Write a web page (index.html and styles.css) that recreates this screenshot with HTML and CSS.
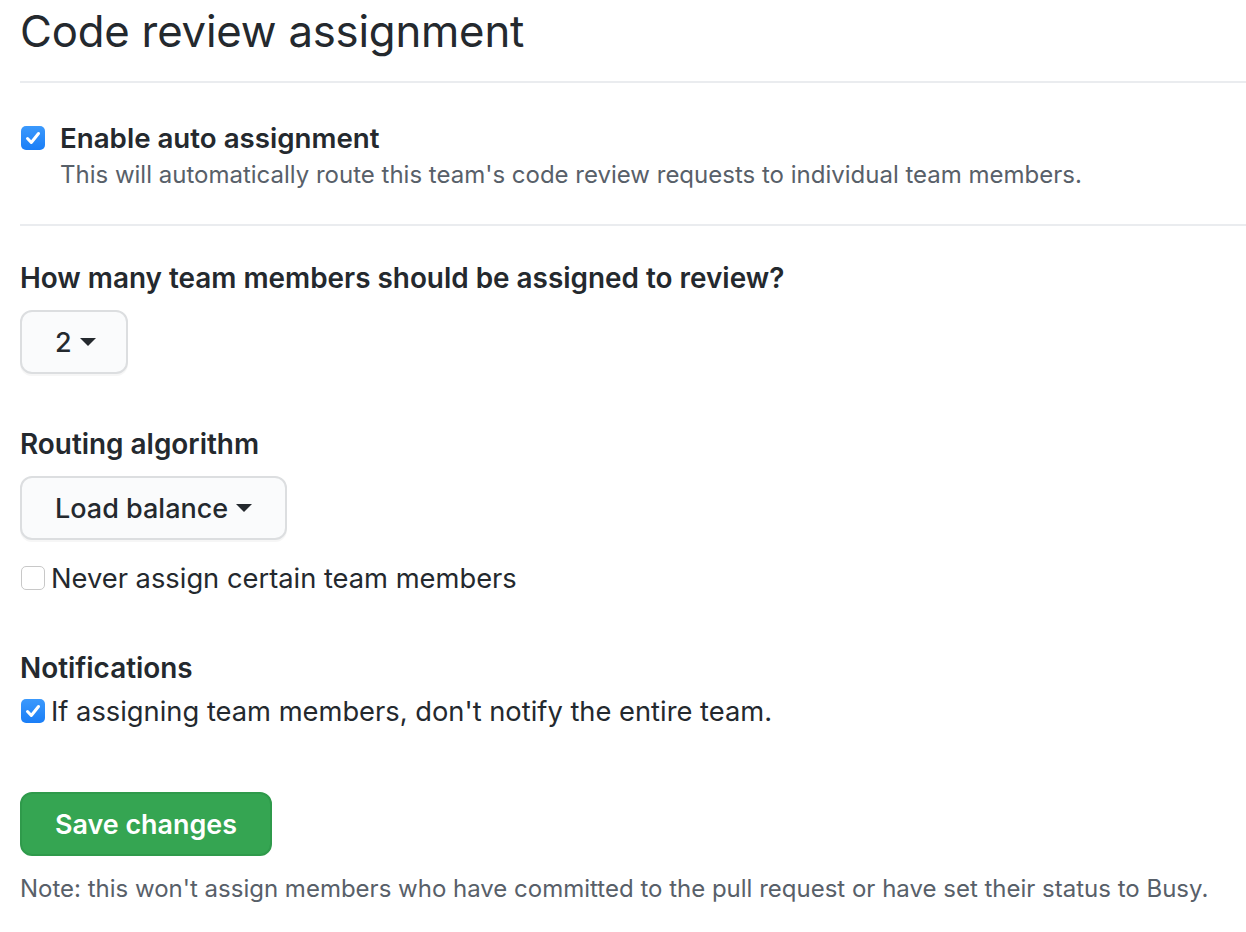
FILE: index.html
```html
<!DOCTYPE html>
<html lang="en">
<head>
<meta charset="utf-8">
<title>Code review assignment</title>
<link rel="stylesheet" href="styles.css">
</head>
<body>
<div class="page">
  <div class="subhead">
    <h2 class="subhead-heading">Code review assignment</h2>
  </div>

  <div class="section section-bordered">
    <label class="check-row check-row-main">
      <span class="cb cb-checked"><svg viewBox="0 0 24 24" width="24" height="24"><path d="M6.5 12.5l3.8 4 7.2-9" fill="none" stroke="#fff" stroke-width="3" stroke-linecap="round" stroke-linejoin="round"/></svg></span>
      <span class="check-label-strong">Enable auto assignment</span>
    </label>
    <p class="check-note">This will automatically route this team's code review requests to individual team members.</p>
  </div>

  <div class="section">
    <h3 class="field-label first">How many team members should be assigned to review?</h3>
    <button class="btn btn-select btn-small"><span>2</span><span class="caret"></span></button>

    <h3 class="field-label">Routing algorithm</h3>
    <button class="btn btn-select"><span>Load balance</span><span class="caret"></span></button>

    <label class="check-row check-row-plain gap-never">
      <span class="cb cb-empty"></span>
      <span class="check-label">Never assign certain team members</span>
    </label>

    <h3 class="field-label notif">Notifications</h3>
    <label class="check-row check-row-plain gap-notify">
      <span class="cb cb-checked"><svg viewBox="0 0 24 24" width="24" height="24"><path d="M6.5 12.5l3.8 4 7.2-9" fill="none" stroke="#fff" stroke-width="3" stroke-linecap="round" stroke-linejoin="round"/></svg></span>
      <span class="check-label">If assigning team members, don't notify the entire team.</span>
    </label>

    <button class="btn btn-primary">Save changes</button>
    <p class="note">Note: this won't assign members who have committed to the pull request or have set their status to Busy.</p>
  </div>
</div>
</body>
</html>
```

FILE: styles.css
```css
* { box-sizing: border-box; }

html, body {
  margin: 0;
  padding: 0;
  background: #ffffff;
}

body {
  font-family: Inter, "Noto Sans", "Liberation Sans", sans-serif;
  color: #24292e;
}

.page {
  padding-left: 20px;
}

.subhead {
  border-bottom: 2px solid #eaecef;
  padding-bottom: 17px;
}

.subhead-heading {
  margin: 0;
  font-size: 43.7px;
  font-weight: 400;
  line-height: 64px;
  letter-spacing: -0.2px;
}

.section-bordered {
  border-bottom: 2px solid #eaecef;
  padding-top: 37px;
  padding-bottom: 31px;
}

.check-row {
  display: flex;
  align-items: center;
  height: 36px;
  cursor: pointer;
}

.check-row-main .cb { margin-right: 15px; }
.check-row-plain .cb { margin-right: 6px; }

.cb {
  width: 24px;
  height: 24px;
  border-radius: 5px;
  flex: none;
  margin-left: 1px;
  display: flex;
}

.cb-checked {
  background: linear-gradient(#3b99fc, #1a7ef7);
}

.cb-empty {
  background: #fff;
  border: 1px solid #c8c8c8;
}

.check-label-strong {
  font-size: 27.7px;
  font-weight: 600;
}

.check-label {
  font-size: 27.3px;
  font-weight: 400;
}

.check-note {
  margin: 1px 0 0 40px;
  font-size: 24px;
  line-height: 36px;
  color: #586069;
}

.field-label {
  margin: 52px 0 14px;
  font-size: 27.9px;
  font-weight: 600;
  line-height: 36px;
}

.field-label.first { margin-top: 34px; }
.field-label.notif { margin-top: 54px; margin-bottom: 7px; }

.btn {
  display: flex;
  align-items: center;
  height: 64px;
  border-radius: 12px;
  font-family: inherit;
  font-size: 27px;
  font-weight: 500;
  cursor: pointer;
}

.btn-select {
  padding: 0 33px;
  background: #fafbfc;
  border: 2px solid #dcdee0;
  color: #24292e;
  box-shadow: 0 2px 0 rgba(27, 31, 35, 0.04);
}

.btn-small {
  width: 108px;
}

.caret {
  width: 0;
  height: 0;
  margin-left: 8px;
  border-left: 8px solid transparent;
  border-right: 8px solid transparent;
  border-top: 8px solid #24292e;
}

.gap-never { margin-top: 20px; }
.gap-notify { margin-bottom: 63px; }

.btn-primary {
  padding: 0 33px;
  background: #35a552;
  border: 2px solid #2f9a4b;
  color: #ffffff;
  font-weight: 600;
  font-size: 26.9px;
}

.note {
  margin: 17px 0 0;
  font-size: 24px;
  line-height: 32px;
  color: #586069;
}
```
